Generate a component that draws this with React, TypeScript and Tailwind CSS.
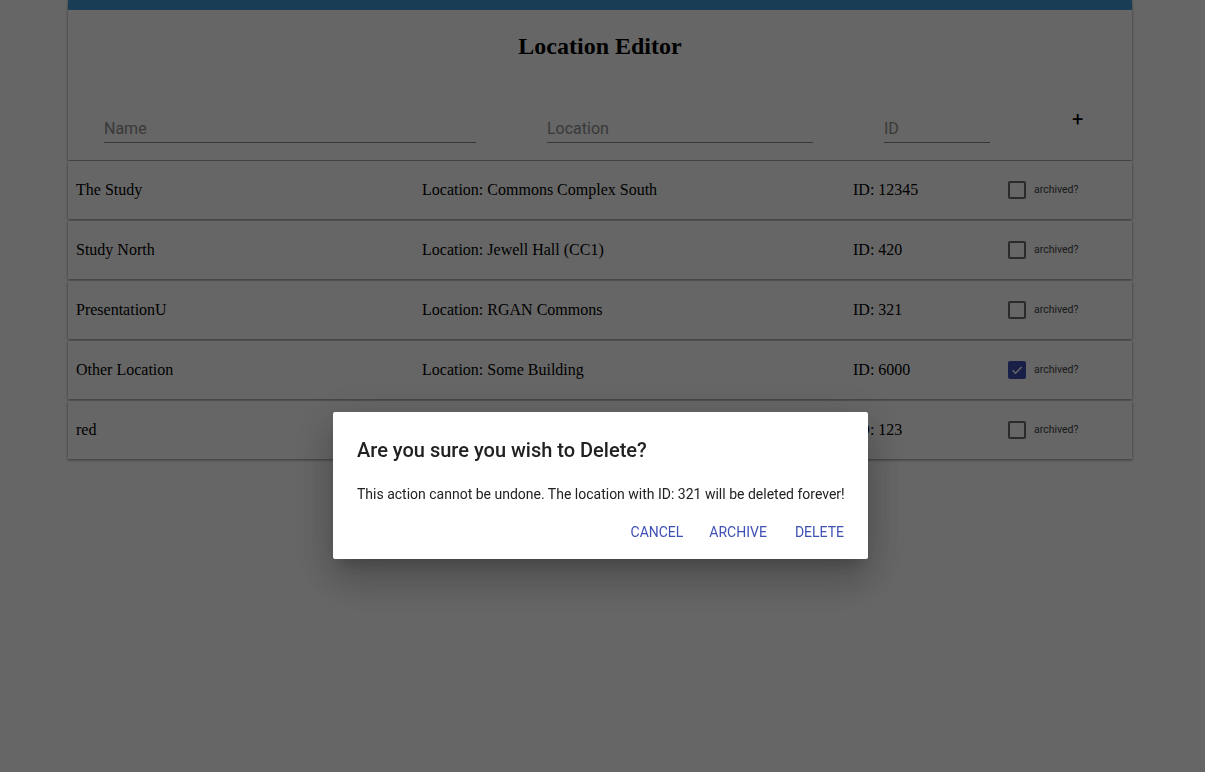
import React from "react";

const rows = [
  { name: "The Study", loc: "Commons Complex South", id: "12345", archived: false },
  { name: "Study North", loc: "Jewell Hall (CC1)", id: "420", archived: false },
  { name: "PresentationU", loc: "RGAN Commons", id: "321", archived: false },
  { name: "Other Location", loc: "Some Building", id: "6000", archived: true },
  { name: "red", loc: "Somewhere", id: "123", archived: false },
];

const serif = { fontFamily: '"Liberation Serif", "Times New Roman", serif' };
const roboto = { fontFamily: 'Roboto, "Liberation Sans", Arial, sans-serif' };

function Checkbox({ checked }: { checked: boolean }) {
  if (checked) {
    return (
      <div className="w-[18px] h-[18px] rounded-[2px] bg-[#3f51b5] flex items-center justify-center">
        <svg width="14" height="14" viewBox="0 0 24 24">
          <path d="M4.5 12.5l5 5L20 7" fill="none" stroke="#ffffff" strokeWidth="2.6" />
        </svg>
      </div>
    );
  }
  return <div className="w-[18px] h-[18px] rounded-[2px] border-2 border-[#6a6a6a] box-border" />;
}

function Field({ label, width }: { label: string; width: string }) {
  return (
    <div className={`${width} border-b border-[#8a8a8a] pb-[4px]`}>
      <div className="text-[16px] text-[#909090] leading-[19px]" style={roboto}>
        {label}
      </div>
    </div>
  );
}

export default function App() {
  return (
    <div className="min-h-screen bg-white relative" style={serif}>
      <div className="ml-[68px] w-[1064px]">
        <div className="bg-white shadow-[0_1px_3px_rgba(0,0,0,0.3),0_1px_2px_rgba(0,0,0,0.2)] h-[160px] flex flex-col">
          <div className="h-[10px] bg-[#4398d6]" />
          <h2 className="text-[24px] font-bold text-black text-center mt-[22px] leading-[28px]" style={serif}>
            Location Editor
          </h2>
          <div className="flex items-end mt-[49px] pl-[36px]">
            <Field label="Name" width="w-[372px]" />
            <div className="w-[71px]" />
            <Field label="Location" width="w-[266px]" />
            <div className="w-[71px]" />
            <Field label="ID" width="w-[106px]" />
            <div className="ml-[82px] mb-[14px] text-[20px] leading-[20px] text-black" style={roboto}>+</div>
          </div>
        </div>
        <div className="flex flex-col gap-[2px] pt-[1px]">
          {rows.map((r) => (
            <div
              key={r.name}
              className="bg-white h-[58px] flex items-center shadow-[0_1px_3px_rgba(0,0,0,0.3),0_1px_2px_rgba(0,0,0,0.2)] text-[16px] text-black"
            >
              <div className="w-[354px] pl-[8px]">{r.name}</div>
              <div className="w-[431px]">Location: {r.loc}</div>
              <div className="w-[155px]">ID: {r.id}</div>
              <div className="flex items-center">
                <Checkbox checked={r.archived} />
                <span className="ml-[8px] text-[10.5px] text-[#444]" style={roboto}>archived?</span>
              </div>
            </div>
          ))}
        </div>
      </div>

      <div className="fixed inset-0 bg-black/60 flex justify-center pt-[412px]">
        <div
          className="w-[535px] h-[147px] bg-white shadow-[0_11px_15px_-7px_rgba(0,0,0,0.2),0_24px_38px_3px_rgba(0,0,0,0.14),0_9px_46px_8px_rgba(0,0,0,0.12)] flex flex-col ml-[-4px] rounded-[2px]"
          style={roboto}
        >
          <div className="px-[24px] pt-[25px] text-[20px] font-medium leading-[26px] text-[#212121] whitespace-nowrap">
            Are you sure you wish to Delete?
          </div>
          <div className="pl-[24px] pt-[21px] text-[14px] leading-[20px] text-[#222] whitespace-nowrap">
            This action cannot be undone. The location with ID: 321 will be deleted forever!
          </div>
          <div className="flex justify-end pr-[16px] mt-[12px] text-[14px] text-[#3f51b5]">
            <span className="px-[8px] py-[6px]">CANCEL</span>
            <span className="px-[8px] py-[6px] ml-[10px]">ARCHIVE</span>
            <span className="px-[8px] py-[6px] ml-[12px]">DELETE</span>
          </div>
        </div>
      </div>
    </div>
  );
}
